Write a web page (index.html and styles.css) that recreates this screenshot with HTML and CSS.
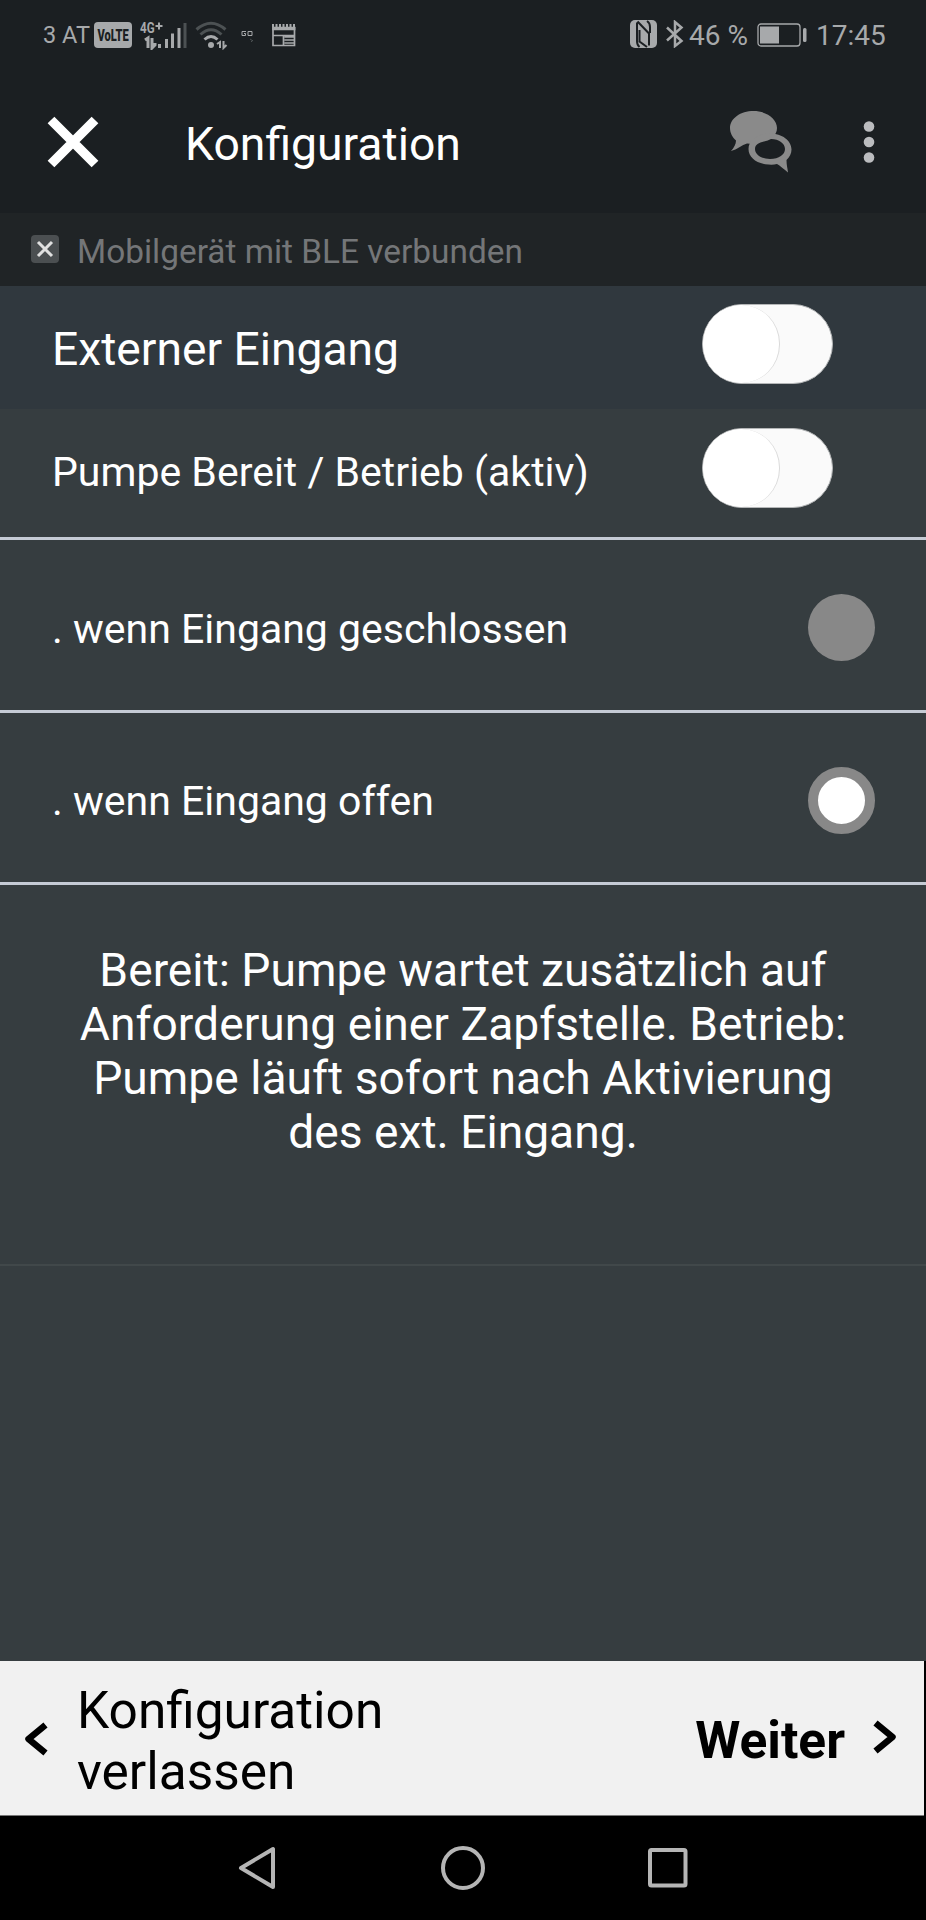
FILE: index.html
```html
<!DOCTYPE html>
<html lang="de">
<head>
<meta charset="utf-8">
<title>Konfiguration</title>
<link rel="stylesheet" href="styles.css">
</head>
<body>
<div class="screen">
  <div class="status">
    <div class="status-left">
      <span class="carrier">3 AT</span>
      <span class="volte"><span class="volte-text">VoLTE</span></span>
      <div class="signal">
        <span class="net">4G</span>
        <svg width="48" height="30" viewBox="0 0 48 30">
          <path d="M19 2.500v7M15.500 6h7" stroke-width="2"/>
          <path d="M5 20l3-2v10M12 18v10l3-3v-2M19.500 24v4M26.500 19v9M32.500 13.500v14.500M39 8v20" stroke-width="3"/>
          <path d="M45 3v25" class="dim" stroke-width="3"/>
        </svg>
      </div>
      <svg class="wifi" width="34" height="30" viewBox="0 0 34 30">
        <path d="M1.500 9.500Q16-3 30.500 9.500M5.500 14.500Q16 5 26.500 14.500" class="dim" stroke-width="3"/>
        <path d="M9.500 19.500q6.500-6 13 0" stroke-width="3"/>
        <circle cx="16" cy="25" r="3" class="fill"/>
        <path d="M22 24l3-2v6M28.500 21v7l3-3" stroke-width="2"/>
      </svg>
      <svg class="go" width="14" height="14" viewBox="0 0 14 14">
        <path d="M5 1.500H1v4h3.500v-2H3M7 1.500h4v4H7z" stroke-width="1"/>
        <path d="M9 9l3 2M10 12l2-2" class="dim" stroke-width="1"/>
      </svg>
      <svg class="news" width="26" height="24" viewBox="0 0 26 24">
        <path d="M2 3v18.500h21.500V3M13.500 13h10M13.500 16h10M13.500 19h10M12.500 11v10M2 11.500h21" stroke-width="1.700"/>
        <path d="M1 1.500h24" stroke-width="3" stroke-dasharray="2 1.500"/>
        <path d="M1.200 4.500h23.200" stroke-width="3.500"/>
      </svg>
    </div>
    <div class="status-right">
      <svg width="27" height="28" viewBox="0 0 27 28">
        <rect width="27" height="28" rx="5" class="fill"/>
        <path class="cut" d="M7 2.500V21Q7 25 9.500 27M7.500 1.500L19 13.500V25.500M17 1Q20 3 20 7V13M9.500 10v11.500L17 27"/>
      </svg>
      <svg class="bt" width="19" height="28" viewBox="0 0 19 28">
        <path d="M2 7.500l14.500 13.500L10 26V2l6.500 5.500L2 20.500" stroke-width="2.500"/>
      </svg>
      <span class="percent">46 %</span>
      <svg class="battery" width="50" height="24" viewBox="0 0 50 24">
        <rect x="1" y="1" width="42" height="22" rx="3" stroke-width="1.300"/>
        <rect x="3" y="3.500" width="19" height="17" class="fill"/>
        <rect x="46" y="5" width="3.500" height="14" rx="1.500" class="fill"/>
      </svg>
      <span class="clock">17:45</span>
    </div>
  </div>

  <header class="appbar">
    <svg class="close" width="52" height="52" viewBox="0 0 52 52"><path d="M4 4l44 44M48 4L4 48"/></svg>
    <h1 class="title">Konfiguration</h1>
    <svg class="chat" width="64" height="64" viewBox="0 0 64 64">
      <path class="chat-solid" d="M24.500 1C11.500 1 1 8.500 1 18c0 5 2.500 9.500 6 12.500C7 34 5 37.500 2 41c6-1.500 11-6 16-7.500q4 .5 9.500-.5C39 32 48 27 48 18S37.500 1 24.500 1z"/>
      <path class="chat-solid" d="M41 23.500c12 0 21.500 7 21.500 16 0 4-2 7.500-5 10.500 0 5 1 8 1.500 12.500-4-3-8-7-11-8.500Q44 55 39.500 54.500C28 54 19.500 47.500 19.500 39S29 23.500 41 23.500z"/>
      <path class="chat-hole" d="M26 39c0-4.500 4-6.500 9-7.500q4-1 7-2.500c8 0 14 4.500 14 10s-6 10-15 10-15-4.500-15-10z"/>
    </svg>
    <svg class="more" width="12" height="42" viewBox="0 0 12 42"><circle cx="6" cy="5.500" r="5.300"/><circle cx="6" cy="21" r="5.300"/><circle cx="6" cy="36.500" r="5.300"/></svg>
  </header>

  <div class="connection">
    <svg width="28" height="28" viewBox="0 0 28 28"><rect width="28" height="28" rx="4"/><path d="M7 7l14 14M21 7L7 21"/></svg>
    <span>Mobilgerät mit BLE verbunden</span>
  </div>

  <main class="content">
    <div class="row row-head">
      <span class="label label-large">Externer Eingang</span>
      <span class="toggle"><span class="knob"></span></span>
    </div>
    <div class="row row-toggle">
      <span class="label">Pumpe Bereit / Betrieb (aktiv)</span>
      <span class="toggle"><span class="knob"></span></span>
    </div>
    <div class="row row-option">
      <span class="label">. wenn Eingang geschlossen</span>
      <span class="radio"></span>
    </div>
    <div class="row row-option">
      <span class="label">. wenn Eingang offen</span>
      <span class="radio radio-on"></span>
    </div>
    <p class="hint">Bereit: Pumpe wartet zusätzlich auf<br>Anforderung einer Zapfstelle. Betrieb:<br>Pumpe läuft sofort nach Aktivierung<br>des ext. Eingang.</p>
  </main>

  <div class="footer-wrap">
    <footer class="footer">
      <div class="leave">
        <svg class="chev-left" width="24" height="34" viewBox="0 0 24 34"><path d="M21.500 3L4.500 17 21.500 31"/></svg>
        <span>Konfiguration<br>verlassen</span>
      </div>
      <div class="next">
        <span>Weiter</span>
        <svg class="chev-right" width="24" height="34" viewBox="0 0 24 34"><path d="M2.500 3l17 14-17 14"/></svg>
      </div>
    </footer>
  </div>

  <nav class="nav">
    <svg width="40" height="44" viewBox="0 0 40 44"><path d="M35 3v38L3 22z"/></svg>
    <svg width="44" height="44" viewBox="0 0 44 44"><circle cx="22" cy="22" r="20"/></svg>
    <svg width="40" height="40" viewBox="0 0 40 40"><rect x="2" y="2" width="35.500" height="35.500" rx="1.500"/></svg>
  </nav>
</div>
</body>
</html>
```

FILE: styles.css
```css
* { box-sizing: border-box; }
body { margin: 0; background: #000; font-family: Roboto, "Liberation Sans", sans-serif; color: #fff; }
svg { display: block; flex: none; fill: none; }
span { white-space: nowrap; }
.screen { width: 926px; height: 1920px; display: flex; flex-direction: column; background: #363d40; overflow: hidden; }

.status { height: 70px; flex: none; display: flex; justify-content: space-between; background: #1b1f22; color: #a7a9ab; padding: 20px 38px 0 43px; }
.status svg { stroke: #a7a9ab; }
.status .fill { fill: #a7a9ab; stroke: none; }
.status .dim { stroke: #4c5153; }
.status .cut { stroke: #1b1f22; stroke-width: 2; }
.status-left, .status-right { display: flex; align-items: flex-start; }
.carrier { width: 51px; font-size: 23.500px; line-height: 30px; }
.volte { display: flex; justify-content: center; width: 38px; height: 26px; margin-top: 2px; border-radius: 4px; background: #a7a9ab; color: #1b1f22; }
.volte-text { flex: none; font-size: 17px; font-weight: 900; line-height: 26px; transform: scaleX(0.65); }
.signal { display: grid; width: 48px; margin-left: 8px; }
.signal > * { grid-area: 1 / 1; }
.net { justify-self: start; font-size: 15.500px; font-weight: 700; line-height: 16px; transform: scaleX(0.750); transform-origin: left; }
.wifi { margin-left: 7px; }
.go { margin: 10px 0 0 12px; }
.news { margin: 4px 0 0 16px; }
.bt { margin-left: 8px; }
.percent { width: 68px; margin-left: 5px; font-size: 28px; line-height: 31px; }
.battery { margin-top: 3px; }
.clock { width: 72px; margin-left: 9px; font-size: 28px; line-height: 31px; }

.appbar { height: 143px; flex: none; display: flex; align-items: flex-start; background: #1b1f22; padding-left: 47px; }
.close { margin-top: 46px; stroke: #fff; stroke-width: 9.500; }
.title { margin: 44px 0 0 86px; width: 544px; font-size: 46.300px; font-weight: 400; line-height: 60px; }
.chat { margin-top: 40px; }
.chat-solid { fill: #8a8a8a; }
.chat-hole { fill: #1b1f22; }
.more { margin: 51px 0 0 70px; fill: #bbbcbf; }

.connection { height: 73px; flex: none; display: flex; background: #202426; color: #747678; padding: 22px 0 0 31px; gap: 18px; font-size: 33.400px; line-height: 34px; }
.connection rect { fill: #4b4f51; }
.connection path { stroke: #e0e0e0; stroke-width: 3; }

.content { flex: 1; }
.row { display: flex; justify-content: space-between; padding-left: 52px; }
.label { font-size: 41px; line-height: 50px; }
.label-large { font-size: 46.200px; }
.row-head { height: 123px; padding-top: 18px; padding-right: 93px; background: #30383e; }
.row-head .label { margin-top: 20px; }
.row-toggle { height: 131px; padding-top: 19px; padding-right: 93px; border-bottom: 3px solid #c5cbd5; }
.row-toggle .label { margin-top: 19px; }
.toggle { width: 131px; height: 80px; border: 1px solid #b4b6b7; border-radius: 40px; background: #fafafa; }
.knob { display: block; width: 77px; height: 78px; border-radius: 39px; background: #fff; border-right: 1px solid #dadada; }
.row-option { height: 172.500px; padding-top: 54px; padding-right: 51px; border-bottom: 3px solid #c5cbd5; }
.row-option .label { margin-top: 9.500px; }
.radio { width: 67px; height: 67px; border-radius: 50%; background: #888; }
.radio-on { border: 10px solid #888; background: #fff; }
.hint { height: 381px; margin: 0; padding-top: 58px; border-bottom: 2px solid #41484a; font-size: 46.200px; line-height: 54px; text-align: center; }

.footer-wrap { flex: none; background: #000; }
.footer { width: 924px; height: 155px; display: flex; justify-content: space-between; background: #f1f1f1; color: #000; border-bottom: 1px solid #777; font-size: 51.400px; }
.footer path { stroke: #000; stroke-width: 6.500; stroke-linejoin: round; }
.footer svg { overflow: visible; }
.leave { display: flex; padding-left: 24px; line-height: 61px; }
.chev-left { margin: 61px 29px 0 0; }
.leave span { margin-top: 19px; }
.next { display: flex; padding-right: 27px; font-weight: 700; font-size: 51.500px; line-height: 60px; }
.next span { margin-top: 50px; }
.chev-right { margin: 59px 0 0 28px; }

.nav { height: 104px; flex: none; display: flex; align-items: center; justify-content: center; gap: 163px; background: #000; }
.nav svg { stroke: #b5b5b5; stroke-width: 4; stroke-linejoin: round; }
```
